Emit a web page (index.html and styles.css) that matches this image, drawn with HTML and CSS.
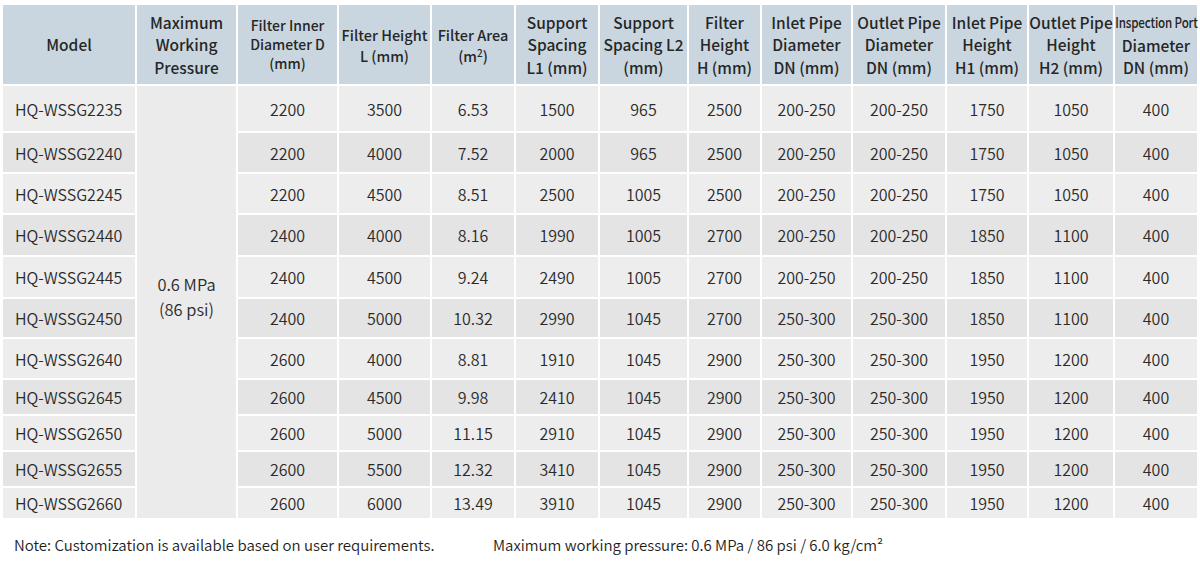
FILE: index.html
```html
<!DOCTYPE html>
<html lang="en">
<head>
<meta charset="utf-8">
<title>HQ-WSSG Specifications</title>
<link rel="stylesheet" href="styles.css">
</head>
<body>
<div class="page">
  <table class="spec">
    <colgroup>
      <col class="c1"><col class="c2"><col class="c3"><col class="c4"><col class="c5"><col class="c6"><col class="c7"><col class="c8"><col class="c9"><col class="c10"><col class="c11"><col class="c12"><col class="c13">
    </colgroup>
    <thead>
      <tr>
        <th>Model</th>
        <th>Maximum<br>Working<br>Pressure</th>
        <th class="sm">Filter Inner<br>Diameter D<br>(mm)</th>
        <th class="md">Filter Height<br>L (mm)</th>
        <th class="md">Filter Area<br>(m<sup>2</sup>)</th>
        <th>Support<br>Spacing<br>L1 (mm)</th>
        <th>Support<br>Spacing L2<br>(mm)</th>
        <th>Filter<br>Height<br>H (mm)</th>
        <th>Inlet Pipe<br>Diameter<br>DN (mm)</th>
        <th>Outlet Pipe<br>Diameter<br>DN (mm)</th>
        <th>Inlet Pipe<br>Height<br>H1 (mm)</th>
        <th>Outlet Pipe<br>Height<br>H2 (mm)</th>
        <th><span class="narrow">Inspection Port</span><br>Diameter<br>DN (mm)</th>
      </tr>
    </thead>
    <tbody>
      <tr><td class="model">HQ-WSSG2235</td><td class="pressure" rowspan="11">0.6 MPa<br>(86 psi)</td><td>2200</td><td>3500</td><td>6.53</td><td>1500</td><td>965</td><td>2500</td><td>200-250</td><td>200-250</td><td>1750</td><td>1050</td><td>400</td></tr>
      <tr><td class="model">HQ-WSSG2240</td><td>2200</td><td>4000</td><td>7.52</td><td>2000</td><td>965</td><td>2500</td><td>200-250</td><td>200-250</td><td>1750</td><td>1050</td><td>400</td></tr>
      <tr><td class="model">HQ-WSSG2245</td><td>2200</td><td>4500</td><td>8.51</td><td>2500</td><td>1005</td><td>2500</td><td>200-250</td><td>200-250</td><td>1750</td><td>1050</td><td>400</td></tr>
      <tr><td class="model">HQ-WSSG2440</td><td>2400</td><td>4000</td><td>8.16</td><td>1990</td><td>1005</td><td>2700</td><td>200-250</td><td>200-250</td><td>1850</td><td>1100</td><td>400</td></tr>
      <tr><td class="model">HQ-WSSG2445</td><td>2400</td><td>4500</td><td>9.24</td><td>2490</td><td>1005</td><td>2700</td><td>200-250</td><td>200-250</td><td>1850</td><td>1100</td><td>400</td></tr>
      <tr><td class="model">HQ-WSSG2450</td><td>2400</td><td>5000</td><td>10.32</td><td>2990</td><td>1045</td><td>2700</td><td>250-300</td><td>250-300</td><td>1850</td><td>1100</td><td>400</td></tr>
      <tr><td class="model">HQ-WSSG2640</td><td>2600</td><td>4000</td><td>8.81</td><td>1910</td><td>1045</td><td>2900</td><td>250-300</td><td>250-300</td><td>1950</td><td>1200</td><td>400</td></tr>
      <tr><td class="model">HQ-WSSG2645</td><td>2600</td><td>4500</td><td>9.98</td><td>2410</td><td>1045</td><td>2900</td><td>250-300</td><td>250-300</td><td>1950</td><td>1200</td><td>400</td></tr>
      <tr><td class="model">HQ-WSSG2650</td><td>2600</td><td>5000</td><td>11.15</td><td>2910</td><td>1045</td><td>2900</td><td>250-300</td><td>250-300</td><td>1950</td><td>1200</td><td>400</td></tr>
      <tr><td class="model">HQ-WSSG2655</td><td>2600</td><td>5500</td><td>12.32</td><td>3410</td><td>1045</td><td>2900</td><td>250-300</td><td>250-300</td><td>1950</td><td>1200</td><td>400</td></tr>
      <tr><td class="model">HQ-WSSG2660</td><td>2600</td><td>6000</td><td>13.49</td><td>3910</td><td>1045</td><td>2900</td><td>250-300</td><td>250-300</td><td>1950</td><td>1200</td><td>400</td></tr>
    </tbody>
  </table>
  <div class="notes">
    <span class="note-a">Note: Customization is available based on user requirements.</span>
    <span class="note-b">Maximum working pressure: 0.6 MPa / 86 psi / 6.0 kg/cm²</span>
  </div>
</div>
</body>
</html>
```

FILE: styles.css
```css
html, body {
  margin: 0;
  padding: 0;
  background: #ffffff;
}

.page {
  padding: 3px 0 0 1px;
  font-family: "Noto Sans CJK SC", "Noto Sans", sans-serif;
  color: #2b2b2b;
}

.spec {
  table-layout: fixed;
  width: 1198px;
  border-collapse: separate;
  border-spacing: 2px;
}

.c1 { width: 132px; }
.c2 { width: 99px; }
.c3 { width: 99px; }
.c4 { width: 91px; }
.c5 { width: 82px; }
.c6 { width: 82px; }
.c7 { width: 87px; }
.c8 { width: 71px; }
.c9 { width: 89px; }
.c10 { width: 92px; }
.c11 { width: 80px; }
.c12 { width: 84px; }
.c13 { width: 82px; }

.spec th {
  background: #c9d6e0;
  height: 79px;
  padding: 0;
  font-size: 15.5px;
  line-height: 22.5px;
  font-weight: 500;
  color: #262626;
  text-align: center;
  vertical-align: middle;
  white-space: nowrap;
}

.spec th.sm {
  font-size: 14px;
  line-height: 19px;
}

.spec th.md {
  font-size: 14.5px;
  line-height: 21px;
}

.spec th sup {
  font-size: 10px;
  line-height: 0;
  vertical-align: 5px;
}

.narrow {
  display: inline-block;
  font-size: 14.5px;
  transform: scaleX(0.8);
  transform-origin: center;
  margin: 0 -12px;
  letter-spacing: -0.2px;
}

.spec td {
  padding: 0;
  font-size: 16px;
  font-weight: 350;
  text-align: center;
  vertical-align: middle;
  white-space: nowrap;
  color: #2a2a2a;
  background: #ededed;
}

.spec tbody tr:nth-child(even) td {
  background: #e4e4e4;
}

.spec td.pressure,
.spec tbody tr:nth-child(even) td.pressure {
  background: #ebebeb;
  line-height: 25px;
  font-size: 16.5px;
  padding-bottom: 10px;
}

.spec td.model {
  text-align: left;
  padding-left: 12px;
}

.spec tbody tr:nth-child(1) { height: 45px; }
.spec tbody tr:nth-child(2) { height: 39px; }
.spec tbody tr:nth-child(3) { height: 39px; }
.spec tbody tr:nth-child(4) { height: 40px; }
.spec tbody tr:nth-child(5) { height: 40px; }
.spec tbody tr:nth-child(6) { height: 38px; }
.spec tbody tr:nth-child(7) { height: 39px; }
.spec tbody tr:nth-child(8) { height: 34px; }
.spec tbody tr:nth-child(9) { height: 34px; }
.spec tbody tr:nth-child(10) { height: 34px; }
.spec tbody tr:nth-child(11) { height: 30px; }

.notes {
  display: flex;
  padding: 14px 0 0 13px;
  font-size: 15px;
  font-weight: 350;
  color: #1e1e1e;
  line-height: 22px;
}

.note-a {
  width: 479px;
}
```
